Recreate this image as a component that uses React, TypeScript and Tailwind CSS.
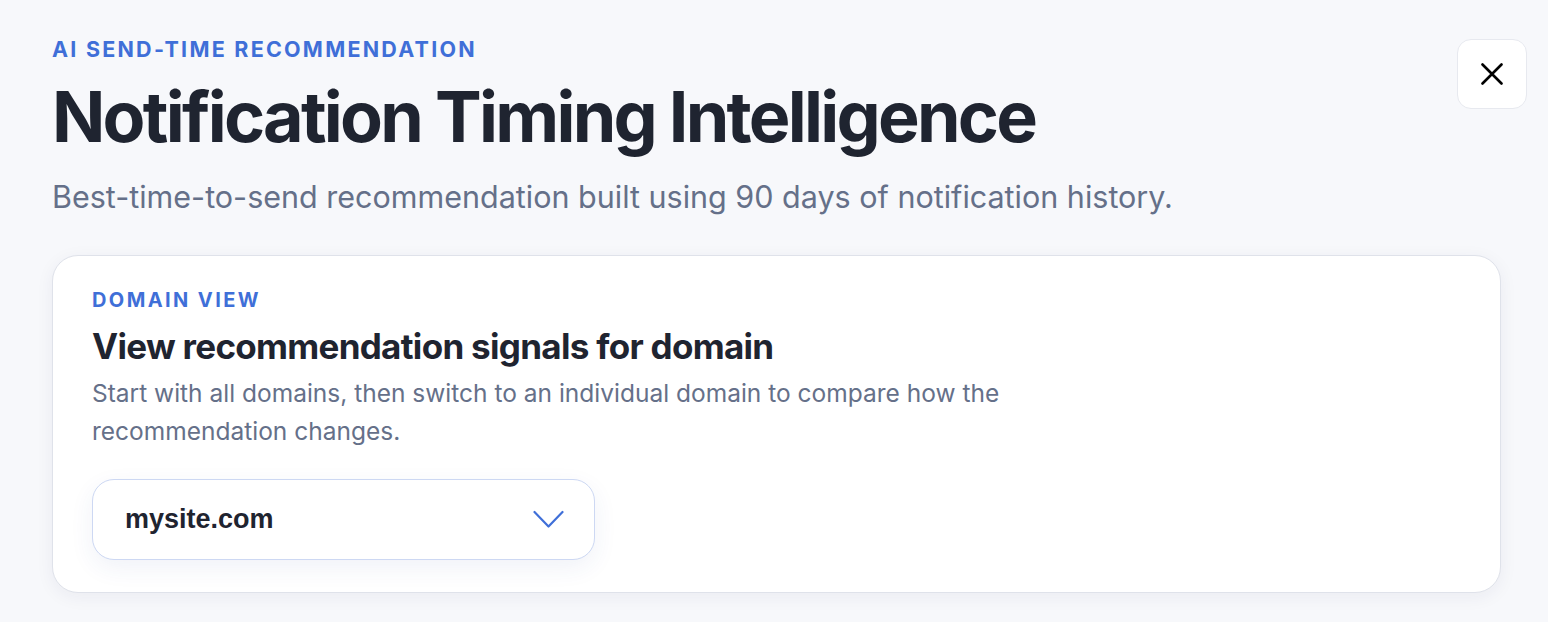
import React from 'react';

const App: React.FC = () => {
    return (
        <div className="min-h-[622px] w-full bg-[#f7f8fb] font-['Inter',sans-serif]">
            <div className="flex items-start justify-between pl-[52px] pr-[21px] pt-[36px]">
                <div className="flex flex-col">
                    <p className="text-[21.5px] font-bold uppercase leading-[26px] tracking-[0.104em] text-[#3f6fd8]">
                        AI send-time recommendation
                    </p>
                    <h1 className="mt-[17px] text-[70px] font-bold leading-[76px] tracking-[-0.039em] text-[#1f2430]">
                        Notification Timing Intelligence
                    </h1>
                    <p className="mt-[24px] text-[30.5px] leading-[36px] text-[#657089]">
                        Best-time-to-send recommendation built using 90 days of notification history.
                    </p>
                </div>
                <button
                    type="button"
                    className="mt-[3px] flex h-[70px] w-[70px] items-center justify-center rounded-[14px] border border-[#e7e9ef] bg-white text-black"
                    aria-label="Close"
                >
                    <svg width="22" height="22" viewBox="0 0 22 22" fill="none">
                        <path d="M1.5 1.5 L20.5 20.5 M20.5 1.5 L1.5 20.5" stroke="currentColor" strokeWidth="2.6" strokeLinecap="round" />
                    </svg>
                </button>
            </div>

            <div className="pl-[52px] pr-[47px] pt-[40px]">
                <section className="rounded-[26px] border border-[#dfe2ea] bg-white pl-[39px] pr-[40px] pb-[32px] pt-[32px] shadow-[0_4px_18px_rgba(30,40,80,0.06)]">
                    <p className="text-[20px] font-bold uppercase leading-[24px] tracking-[0.12em] text-[#3f6fd8]">
                        Domain view
                    </p>
                    <h2 className="mt-[13px] text-[35px] font-bold leading-[42px] tracking-[-0.02em] text-[#1f2430]">
                        View recommendation signals for domain
                    </h2>
                    <p className="mt-[7px] max-w-[960px] text-[24.5px] leading-[38px] text-[#657089]">
                        Start with all domains, then switch to an individual domain to compare how the recommendation changes.
                    </p>
                    <div className="mt-[29px] flex h-[81px] w-[503px] items-center justify-between rounded-[22px] border border-[#cdd8f3] bg-white pl-[32px] pr-[30px] shadow-[0_8px_24px_rgba(40,70,160,0.07)]">
                        <span className="font-['Liberation_Sans',Arial,sans-serif] text-[27px] font-bold text-[#1f2430]">
                            mysite.com
                        </span>
                        <svg width="31" height="19" viewBox="0 0 31 19" fill="none" className="text-[#3f6fd8]">
                            <path d="M1.5 2 L15.5 16.5 L29.5 2" stroke="currentColor" strokeWidth="2.2" strokeLinecap="round" strokeLinejoin="round" />
                        </svg>
                    </div>
                </section>
            </div>
        </div>
    );
};

export default App;
